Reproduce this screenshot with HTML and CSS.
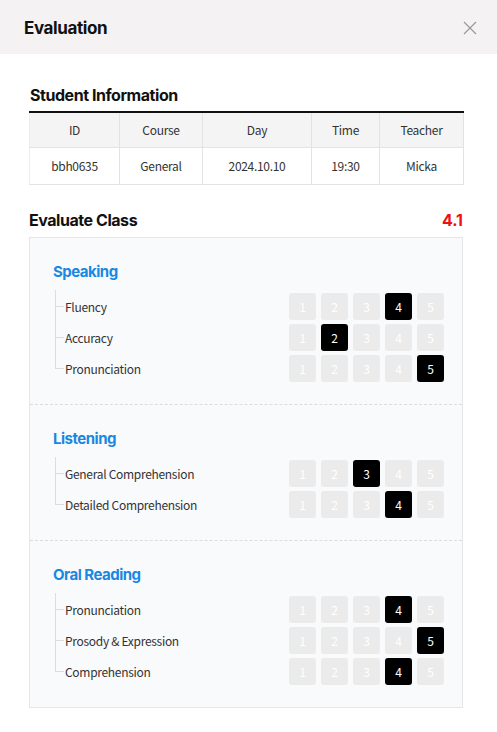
FILE: index.html
```html
<!DOCTYPE html>
<html lang="en">
<head>
<meta charset="utf-8">
<title>Evaluation</title>
<link rel="stylesheet" href="styles.css">
</head>
<body>
<div class="modal">
  <header class="modal-head">
    <h1 class="modal-title">Evaluation</h1>
    <button class="close" aria-label="Close">
      <svg width="14" height="14" viewBox="0 0 14 14"><path d="M1 1 L13 13 M13 1 L1 13" stroke="#9a9a9a" stroke-width="1.2" fill="none"/></svg>
    </button>
  </header>
  <main class="modal-body">
    <h2 class="sec-title">Student Information</h2>
    <table class="info">
      <thead>
        <tr><th class="c1">ID</th><th class="c2">Course</th><th class="c3">Day</th><th class="c4">Time</th><th class="c5">Teacher</th></tr>
      </thead>
      <tbody>
        <tr><td>bbh0635</td><td>General</td><td>2024.10.10</td><td>19:30</td><td>Micka</td></tr>
      </tbody>
    </table>

    <div class="eval-head">
      <h2 class="sec-title">Evaluate Class</h2>
      <span class="total">4.1</span>
    </div>

    <div class="card">
      <section class="group">
        <h3 class="group-title">Speaking</h3>
        <ul class="items">
          <li class="item"><span class="label">Fluency</span>
            <div class="scores"><span class="sc">1</span><span class="sc">2</span><span class="sc">3</span><span class="sc on">4</span><span class="sc">5</span></div></li>
          <li class="item"><span class="label">Accuracy</span>
            <div class="scores"><span class="sc">1</span><span class="sc on">2</span><span class="sc">3</span><span class="sc">4</span><span class="sc">5</span></div></li>
          <li class="item"><span class="label">Pronunciation</span>
            <div class="scores"><span class="sc">1</span><span class="sc">2</span><span class="sc">3</span><span class="sc">4</span><span class="sc on">5</span></div></li>
        </ul>
      </section>
      <section class="group">
        <h3 class="group-title">Listening</h3>
        <ul class="items">
          <li class="item"><span class="label">General Comprehension</span>
            <div class="scores"><span class="sc">1</span><span class="sc">2</span><span class="sc on">3</span><span class="sc">4</span><span class="sc">5</span></div></li>
          <li class="item"><span class="label">Detailed Comprehension</span>
            <div class="scores"><span class="sc">1</span><span class="sc">2</span><span class="sc">3</span><span class="sc on">4</span><span class="sc">5</span></div></li>
        </ul>
      </section>
      <section class="group">
        <h3 class="group-title">Oral Reading</h3>
        <ul class="items">
          <li class="item"><span class="label">Pronunciation</span>
            <div class="scores"><span class="sc">1</span><span class="sc">2</span><span class="sc">3</span><span class="sc on">4</span><span class="sc">5</span></div></li>
          <li class="item"><span class="label">Prosody &amp; Expression</span>
            <div class="scores"><span class="sc">1</span><span class="sc">2</span><span class="sc">3</span><span class="sc">4</span><span class="sc on">5</span></div></li>
          <li class="item"><span class="label">Comprehension</span>
            <div class="scores"><span class="sc">1</span><span class="sc">2</span><span class="sc">3</span><span class="sc on">4</span><span class="sc">5</span></div></li>
        </ul>
      </section>
    </div>
  </main>
</div>
</body>
</html>
```

FILE: styles.css
```css
* { box-sizing: border-box; }

body {
  margin: 0;
  background: #ffffff;
  font-family: "Noto Sans CJK KR", "Noto Sans", sans-serif;
  color: #333;
}

.modal-head {
  height: 54px;
  background: #f4f2f2;
  display: flex;
  align-items: center;
  justify-content: space-between;
  padding: 1px 20px 0 24px;
}

.modal-title {
  margin: 0;
  font-family: Inter, "Liberation Sans", sans-serif;
  font-size: 17px;
  font-weight: 700;
  letter-spacing: -0.4px;
  color: #111;
  line-height: 20px;
}

.close {
  border: 0;
  background: none;
  padding: 0;
  width: 14px;
  height: 14px;
  display: flex;
  cursor: pointer;
}

.modal-body {
  padding: 31px 34px 0 29px;
}

.sec-title {
  margin: 0 0 6px 1px;
  font-family: Inter, "Liberation Sans", sans-serif;
  font-size: 16px;
  font-weight: 700;
  letter-spacing: -0.45px;
  line-height: 20px;
  color: #111;
}

.info {
  width: 434px;
  border-collapse: collapse;
  border-top: 2px solid #111;
  font-size: 12px;
  letter-spacing: -0.3px;
  color: #333;
  table-layout: fixed;
}

.info th, .info td {
  border: 1px solid #e3e3e3;
  text-align: center;
  font-weight: 400;
  padding: 0;
}

.info th {
  background: #f4f4f4;
  height: 35px;
}

.info td {
  height: 37px;
  background: #fff;
}

.info tr > :first-child { border-left-color: #ececec; }

.c1 { width: 90px; }
.c2 { width: 83px; }
.c3 { width: 109px; }
.c4 { width: 68px; }
.c5 { width: 84px; }

.eval-head {
  margin-top: 25px;
  display: flex;
  justify-content: space-between;
  align-items: center;
  width: 434px;
  margin-bottom: 7px;
}

.eval-head .sec-title { margin: 0; }

.total {
  font-family: Inter, "Liberation Sans", sans-serif;
  font-size: 16px;
  font-weight: 700;
  color: #ee1111;
  line-height: 20px;
}

.card {
  width: 434px;
  border: 1px solid #e6e6e6;
  background: #f9fafc;
}

.group {
  padding: 24px 18px 22px 23px;
}

.group + .group {
  border-top: 1px dashed #dcdcdc;
  padding-top: 24px;
}

.group:last-child { padding-bottom: 22px; }

.group-title {
  margin: 0 0 11px;
  font-family: Inter, "Liberation Sans", sans-serif;
  font-size: 15px;
  font-weight: 700;
  letter-spacing: -0.5px;
  line-height: 20px;
  color: #1a87e0;
}

.items {
  list-style: none;
  margin: 0;
  padding: 0 0 0 12px;
  position: relative;
}

.items::before {
  content: "";
  position: absolute;
  left: 2px;
  top: -3px;
  bottom: 13px;
  width: 1px;
  background: #dddddd;
}

.item {
  display: flex;
  justify-content: space-between;
  align-items: center;
  height: 27px;
  margin-bottom: 4px;
}

.item:last-child { margin-bottom: 0; }

.label {
  position: relative;
  font-size: 12px;
  letter-spacing: -0.3px;
  color: #333;
}

.label::before {
  content: "";
  position: absolute;
  left: -10px;
  top: 50%;
  width: 9px;
  height: 1px;
  background: #dddddd;
}

.scores {
  display: flex;
  gap: 5px;
}

.sc {
  width: 27px;
  height: 27px;
  border-radius: 3px;
  background: #ebebeb;
  color: #fff;
  font-size: 12px;
  display: flex;
  align-items: center;
  justify-content: center;
}

.sc.on {
  background: #000;
}
```
